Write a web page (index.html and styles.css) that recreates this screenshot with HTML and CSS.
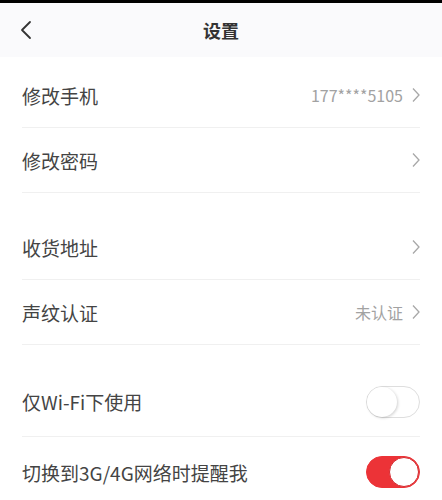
FILE: index.html
```html
<!DOCTYPE html>
<html lang="zh-CN">
<head>
  <meta charset="UTF-8" />
  <title>设置</title>
  <link rel="stylesheet" href="styles.css">
</head>
<body>
  <div class="status-bar"></div>

  <header class="nav">
    <span class="back">
      <svg width="14" height="20" viewBox="0 0 14 20"><path d="M11 2 L3 10 L11 18" fill="none" stroke="#333" stroke-width="1.8" stroke-linecap="round" stroke-linejoin="round"/></svg>
    </span>
    <h1>设置</h1>
  </header>

  <section class="group first">
    <div class="row">
      <span class="label">修改手机</span>
      <span class="value">177****5105</span>
      <span class="arrow"><svg width="10" height="16" viewBox="0 0 10 16"><path d="M2 1.5 L8 8 L2 14.5" fill="none" stroke="#a8a8a8" stroke-width="1.3"/></svg></span>
    </div>
    <div class="row">
      <span class="label">修改密码</span>
      <span class="arrow"><svg width="10" height="16" viewBox="0 0 10 16"><path d="M2 1.5 L8 8 L2 14.5" fill="none" stroke="#a8a8a8" stroke-width="1.3"/></svg></span>
    </div>
  </section>

  <section class="group">
    <div class="row">
      <span class="label">收货地址</span>
      <span class="arrow"><svg width="10" height="16" viewBox="0 0 10 16"><path d="M2 1.5 L8 8 L2 14.5" fill="none" stroke="#a8a8a8" stroke-width="1.3"/></svg></span>
    </div>
    <div class="row">
      <span class="label">声纹认证</span>
      <span class="value">未认证</span>
      <span class="arrow"><svg width="10" height="16" viewBox="0 0 10 16"><path d="M2 1.5 L8 8 L2 14.5" fill="none" stroke="#a8a8a8" stroke-width="1.3"/></svg></span>
    </div>
  </section>

  <section class="group">
    <div class="row tall">
      <span class="label">仅Wi-Fi下使用</span>
      <span class="switch"><span class="knob"></span></span>
    </div>
    <div class="row tall">
      <span class="label">切换到3G/4G网络时提醒我</span>
      <span class="switch on"><span class="knob"></span></span>
    </div>
  </section>
</body>
</html>
```

FILE: styles.css
```css
* {
  margin: 0;
  padding: 0;
  box-sizing: border-box;
  font-family: "Noto Sans CJK SC", "Noto Sans", sans-serif;
}

body {
  width: 442px;
  height: 500px;
  overflow: hidden;
  background: #ffffff;
  color: #333333;
}

.status-bar {
  height: 3px;
  background: #000000;
}

.nav {
  height: 54px;
  background: #fafafc;
  display: flex;
  align-items: center;
  justify-content: center;
  position: relative;
}

.nav h1 {
  font-size: 18px;
  font-weight: 700;
  color: #333333;
  line-height: 1;
}

.back {
  position: absolute;
  left: 19px;
  top: 17px;
  display: flex;
}

.group {
  margin-top: 22px;
  padding: 0 22px;
}

.group.first {
  margin-top: 6px;
}

.row {
  height: 65px;
  display: flex;
  align-items: center;
  border-bottom: 1px solid #f0f0f0;
}

.row.tall {
  height: 70px;
}

.group:last-child .row:last-child {
  border-bottom: none;
}

.label {
  flex: 1;
  font-size: 19px;
  color: #444444;
  line-height: 1;
}

.value {
  font-size: 16px;
  color: #a2a2a2;
  margin-right: 8px;
  line-height: 1;
}

.arrow {
  display: flex;
  margin-right: -1px;
}

.switch {
  width: 54px;
  height: 32px;
  border-radius: 16px;
  border: 1px solid #dedede;
  background: #ffffff;
  position: relative;
}

.switch .knob {
  position: absolute;
  top: 0;
  left: 0;
  width: 30px;
  height: 30px;
  border-radius: 50%;
  background: #ffffff;
  box-shadow: 1px 1px 3px rgba(0, 0, 0, 0.18);
}

.switch.on {
  background: #ec3337;
  border-color: #ec3337;
}

.switch.on .knob {
  left: auto;
  right: 0;
  border: 1px solid #d42a2f;
  box-shadow: none;
}
```
